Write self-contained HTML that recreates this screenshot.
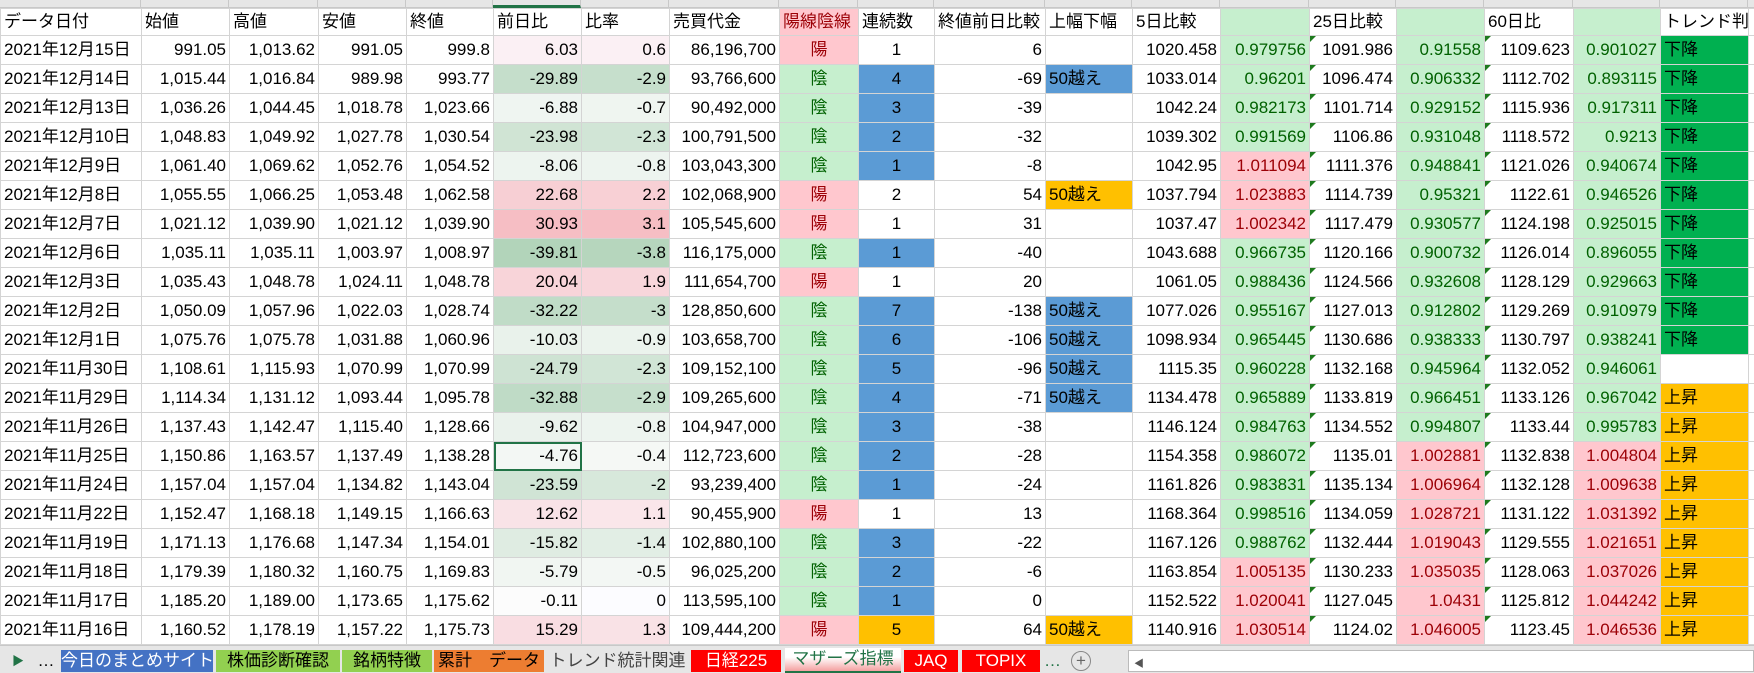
<!DOCTYPE html>
<html style="width:1754px;height:673px;overflow:hidden"><head><meta charset="utf-8">
<style>
*{margin:0;padding:0;box-sizing:border-box}
body{width:1754px;height:673px;overflow:hidden;background:#fff;font-family:"Liberation Sans","Noto Sans CJK JP",sans-serif;font-size:17px;color:#000;position:relative}
#top{position:absolute;left:0;top:0;width:1754px;height:8px;background:#e6e6e6;border-bottom:1px solid #c8c8c8}
#top div{position:absolute;top:0;height:8px;border-right:1px solid #c8c8c8}
table{position:absolute;left:0;top:8px;border-collapse:collapse;table-layout:fixed;width:1754px}
tr{height:29px}
tr.h{height:27px}
td{border:1px solid #d4d4d4;padding:0 3px;text-align:right;white-space:nowrap;overflow:hidden;line-height:20px}
tr.h td{text-align:left}
td.l{text-align:left}td.c{text-align:center}
.p{background:#ffc7ce;color:#9c0006}.g{background:#c6efce;color:#006100}
.b{background:#5b9bd5}.o{background:#ffc000}.dg{background:#00b050}
.t{position:relative}.t:before{content:"";position:absolute;left:0;top:0;border-top:6px solid #1e7a1e;border-right:6px solid transparent}
.sel{outline:2px solid #217346;outline-offset:-2px}
#tabs{position:absolute;left:0;top:645px;width:1754px;height:28px;background:#e6e6e6;border-top:1px solid #c8c8c8;z-index:2}
.tab{position:absolute;top:4px;height:22px;font-size:17px;line-height:22px;text-align:center;color:#000;white-space:nowrap;overflow:hidden}
</style></head><body>
<div id="top">
<div style="left:0;width:141px"></div><div style="left:141px;width:88px"></div><div style="left:229px;width:89px"></div><div style="left:318px;width:88px"></div><div style="left:406px;width:87px"></div><div style="left:493px;width:88px;border-bottom:3px solid #217346"></div><div style="left:581px;width:88px"></div><div style="left:669px;width:110px"></div><div style="left:779px;width:79px"></div><div style="left:858px;width:76px"></div><div style="left:934px;width:111px"></div><div style="left:1045px;width:87px"></div><div style="left:1132px;width:88px"></div><div style="left:1220px;width:89px"></div><div style="left:1309px;width:87px"></div><div style="left:1396px;width:88px"></div><div style="left:1484px;width:89px"></div><div style="left:1573px;width:87px"></div><div style="left:1660px;width:88px"></div>
</div>
<table>
<colgroup><col style="width:141px"><col style="width:88px"><col style="width:89px"><col style="width:88px"><col style="width:87px"><col style="width:88px"><col style="width:88px"><col style="width:110px"><col style="width:79px"><col style="width:76px"><col style="width:111px"><col style="width:87px"><col style="width:88px"><col style="width:89px"><col style="width:87px"><col style="width:88px"><col style="width:89px"><col style="width:87px"><col style="width:88px"><col style="width:6px"></colgroup>
<tr class="h"><td>データ日付</td><td>始値</td><td>高値</td><td>安値</td><td>終値</td><td>前日比</td><td>比率</td><td>売買代金</td><td class="p">陽線陰線</td><td>連続数</td><td>終値前日比較</td><td>上幅下幅</td><td>5日比較</td><td class="g"></td><td>25日比較</td><td class="g"></td><td>60日比</td><td class="g"></td><td>トレンド判</td><td></td></tr>
<tr><td class="l">2021年12月15日</td><td>991.05</td><td>1,013.62</td><td>991.05</td><td>999.8</td><td class="s1">6.03</td><td class="s2">0.6</td><td>86,196,700</td><td class="c p">陽</td><td class="c">1</td><td>6</td><td></td><td>1020.458</td><td class="g">0.979756</td><td class="t">1091.986</td><td class="g">0.91558</td><td class="t">1109.623</td><td class="g">0.901027</td><td class="l dg">下降</td><td></td></tr>
<tr><td class="l">2021年12月14日</td><td>1,015.44</td><td>1,016.84</td><td>989.98</td><td>993.77</td><td class="s1">-29.89</td><td class="s2">-2.9</td><td>93,766,600</td><td class="c g">陰</td><td class="c b">4</td><td>-69</td><td class="l b">50越え</td><td>1033.014</td><td class="g">0.96201</td><td class="t">1096.474</td><td class="g">0.906332</td><td class="t">1112.702</td><td class="g">0.893115</td><td class="l dg">下降</td><td></td></tr>
<tr><td class="l">2021年12月13日</td><td>1,036.26</td><td>1,044.45</td><td>1,018.78</td><td>1,023.66</td><td class="s1">-6.88</td><td class="s2">-0.7</td><td>90,492,000</td><td class="c g">陰</td><td class="c b">3</td><td>-39</td><td></td><td>1042.24</td><td class="g">0.982173</td><td class="t">1101.714</td><td class="g">0.929152</td><td class="t">1115.936</td><td class="g">0.917311</td><td class="l dg">下降</td><td></td></tr>
<tr><td class="l">2021年12月10日</td><td>1,048.83</td><td>1,049.92</td><td>1,027.78</td><td>1,030.54</td><td class="s1">-23.98</td><td class="s2">-2.3</td><td>100,791,500</td><td class="c g">陰</td><td class="c b">2</td><td>-32</td><td></td><td>1039.302</td><td class="g">0.991569</td><td class="t">1106.86</td><td class="g">0.931048</td><td class="t">1118.572</td><td class="g">0.9213</td><td class="l dg">下降</td><td></td></tr>
<tr><td class="l">2021年12月9日</td><td>1,061.40</td><td>1,069.62</td><td>1,052.76</td><td>1,054.52</td><td class="s1">-8.06</td><td class="s2">-0.8</td><td>103,043,300</td><td class="c g">陰</td><td class="c b">1</td><td>-8</td><td></td><td>1042.95</td><td class="p">1.011094</td><td class="t">1111.376</td><td class="g">0.948841</td><td class="t">1121.026</td><td class="g">0.940674</td><td class="l dg">下降</td><td></td></tr>
<tr><td class="l">2021年12月8日</td><td>1,055.55</td><td>1,066.25</td><td>1,053.48</td><td>1,062.58</td><td class="s1">22.68</td><td class="s2">2.2</td><td>102,068,900</td><td class="c p">陽</td><td class="c">2</td><td>54</td><td class="l o">50越え</td><td>1037.794</td><td class="p">1.023883</td><td class="t">1114.739</td><td class="g">0.95321</td><td class="t">1122.61</td><td class="g">0.946526</td><td class="l dg">下降</td><td></td></tr>
<tr><td class="l">2021年12月7日</td><td>1,021.12</td><td>1,039.90</td><td>1,021.12</td><td>1,039.90</td><td class="s1">30.93</td><td class="s2">3.1</td><td>105,545,600</td><td class="c p">陽</td><td class="c">1</td><td>31</td><td></td><td>1037.47</td><td class="p">1.002342</td><td class="t">1117.479</td><td class="g">0.930577</td><td class="t">1124.198</td><td class="g">0.925015</td><td class="l dg">下降</td><td></td></tr>
<tr><td class="l">2021年12月6日</td><td>1,035.11</td><td>1,035.11</td><td>1,003.97</td><td>1,008.97</td><td class="s1">-39.81</td><td class="s2">-3.8</td><td>116,175,000</td><td class="c g">陰</td><td class="c b">1</td><td>-40</td><td></td><td>1043.688</td><td class="g">0.966735</td><td class="t">1120.166</td><td class="g">0.900732</td><td class="t">1126.014</td><td class="g">0.896055</td><td class="l dg">下降</td><td></td></tr>
<tr><td class="l">2021年12月3日</td><td>1,035.43</td><td>1,048.78</td><td>1,024.11</td><td>1,048.78</td><td class="s1">20.04</td><td class="s2">1.9</td><td>111,654,700</td><td class="c p">陽</td><td class="c">1</td><td>20</td><td></td><td>1061.05</td><td class="g">0.988436</td><td class="t">1124.566</td><td class="g">0.932608</td><td class="t">1128.129</td><td class="g">0.929663</td><td class="l dg">下降</td><td></td></tr>
<tr><td class="l">2021年12月2日</td><td>1,050.09</td><td>1,057.96</td><td>1,022.03</td><td>1,028.74</td><td class="s1">-32.22</td><td class="s2">-3</td><td>128,850,600</td><td class="c g">陰</td><td class="c b">7</td><td>-138</td><td class="l b">50越え</td><td>1077.026</td><td class="g">0.955167</td><td class="t">1127.013</td><td class="g">0.912802</td><td class="t">1129.269</td><td class="g">0.910979</td><td class="l dg">下降</td><td></td></tr>
<tr><td class="l">2021年12月1日</td><td>1,075.76</td><td>1,075.78</td><td>1,031.88</td><td>1,060.96</td><td class="s1">-10.03</td><td class="s2">-0.9</td><td>103,658,700</td><td class="c g">陰</td><td class="c b">6</td><td>-106</td><td class="l b">50越え</td><td>1098.934</td><td class="g">0.965445</td><td class="t">1130.686</td><td class="g">0.938333</td><td class="t">1130.797</td><td class="g">0.938241</td><td class="l dg">下降</td><td></td></tr>
<tr><td class="l">2021年11月30日</td><td>1,108.61</td><td>1,115.93</td><td>1,070.99</td><td>1,070.99</td><td class="s1">-24.79</td><td class="s2">-2.3</td><td>109,152,100</td><td class="c g">陰</td><td class="c b">5</td><td>-96</td><td class="l b">50越え</td><td>1115.35</td><td class="g">0.960228</td><td class="t">1132.168</td><td class="g">0.945964</td><td class="t">1132.052</td><td class="g">0.946061</td><td></td><td></td></tr>
<tr><td class="l">2021年11月29日</td><td>1,114.34</td><td>1,131.12</td><td>1,093.44</td><td>1,095.78</td><td class="s1">-32.88</td><td class="s2">-2.9</td><td>109,265,600</td><td class="c g">陰</td><td class="c b">4</td><td>-71</td><td class="l b">50越え</td><td>1134.478</td><td class="g">0.965889</td><td class="t">1133.819</td><td class="g">0.966451</td><td class="t">1133.126</td><td class="g">0.967042</td><td class="l o">上昇</td><td></td></tr>
<tr><td class="l">2021年11月26日</td><td>1,137.43</td><td>1,142.47</td><td>1,115.40</td><td>1,128.66</td><td class="s1">-9.62</td><td class="s2">-0.8</td><td>104,947,000</td><td class="c g">陰</td><td class="c b">3</td><td>-38</td><td></td><td>1146.124</td><td class="g">0.984763</td><td class="t">1134.552</td><td class="g">0.994807</td><td class="t">1133.44</td><td class="g">0.995783</td><td class="l o">上昇</td><td></td></tr>
<tr><td class="l">2021年11月25日</td><td>1,150.86</td><td>1,163.57</td><td>1,137.49</td><td>1,138.28</td><td class="s1 sel">-4.76</td><td class="s2">-0.4</td><td>112,723,600</td><td class="c g">陰</td><td class="c b">2</td><td>-28</td><td></td><td>1154.358</td><td class="g">0.986072</td><td class="t">1135.01</td><td class="p">1.002881</td><td class="t">1132.838</td><td class="p">1.004804</td><td class="l o">上昇</td><td></td></tr>
<tr><td class="l">2021年11月24日</td><td>1,157.04</td><td>1,157.04</td><td>1,134.82</td><td>1,143.04</td><td class="s1">-23.59</td><td class="s2">-2</td><td>93,239,400</td><td class="c g">陰</td><td class="c b">1</td><td>-24</td><td></td><td>1161.826</td><td class="g">0.983831</td><td class="t">1135.134</td><td class="p">1.006964</td><td class="t">1132.128</td><td class="p">1.009638</td><td class="l o">上昇</td><td></td></tr>
<tr><td class="l">2021年11月22日</td><td>1,152.47</td><td>1,168.18</td><td>1,149.15</td><td>1,166.63</td><td class="s1">12.62</td><td class="s2">1.1</td><td>90,455,900</td><td class="c p">陽</td><td class="c">1</td><td>13</td><td></td><td>1168.364</td><td class="g">0.998516</td><td class="t">1134.059</td><td class="p">1.028721</td><td class="t">1131.122</td><td class="p">1.031392</td><td class="l o">上昇</td><td></td></tr>
<tr><td class="l">2021年11月19日</td><td>1,171.13</td><td>1,176.68</td><td>1,147.34</td><td>1,154.01</td><td class="s1">-15.82</td><td class="s2">-1.4</td><td>102,880,100</td><td class="c g">陰</td><td class="c b">3</td><td>-22</td><td></td><td>1167.126</td><td class="g">0.988762</td><td class="t">1132.444</td><td class="p">1.019043</td><td class="t">1129.555</td><td class="p">1.021651</td><td class="l o">上昇</td><td></td></tr>
<tr><td class="l">2021年11月18日</td><td>1,179.39</td><td>1,180.32</td><td>1,160.75</td><td>1,169.83</td><td class="s1">-5.79</td><td class="s2">-0.5</td><td>96,025,200</td><td class="c g">陰</td><td class="c b">2</td><td>-6</td><td></td><td>1163.854</td><td class="p">1.005135</td><td class="t">1130.233</td><td class="p">1.035035</td><td class="t">1128.063</td><td class="p">1.037026</td><td class="l o">上昇</td><td></td></tr>
<tr><td class="l">2021年11月17日</td><td>1,185.20</td><td>1,189.00</td><td>1,173.65</td><td>1,175.62</td><td class="s1">-0.11</td><td class="s2">0</td><td>113,595,100</td><td class="c g">陰</td><td class="c b">1</td><td>0</td><td></td><td>1152.522</td><td class="p">1.020041</td><td class="t">1127.045</td><td class="p">1.0431</td><td class="t">1125.812</td><td class="p">1.044242</td><td class="l o">上昇</td><td></td></tr>
<tr><td class="l">2021年11月16日</td><td>1,160.52</td><td>1,178.19</td><td>1,157.22</td><td>1,175.73</td><td class="s1">15.29</td><td class="s2">1.3</td><td>109,444,200</td><td class="c p">陽</td><td class="c o">5</td><td>64</td><td class="l o">50越え</td><td>1140.916</td><td class="p">1.030514</td><td class="t">1124.02</td><td class="p">1.046005</td><td class="t">1123.45</td><td class="p">1.046536</td><td class="l o">上昇</td><td></td></tr>
<tr><td class="l"></td><td></td><td></td><td></td><td></td><td class="s1"></td><td class="s2"></td><td></td><td class="c g"></td><td class="c b"></td><td></td><td></td><td></td><td class="g"></td><td class="t"></td><td class="p"></td><td class="t"></td><td class="p"></td><td class="l o"></td><td></td></tr>
</table>
<div id="tabs">
<div class="tab" style="left:12px;width:12px;font-size:12px;color:#217346">&#9654;</div>
<div class="tab" style="left:36px;width:20px">…</div>
<div class="tab" style="left:61px;width:152px;background:#4472c4;color:#fff">今日のまとめサイト</div>
<div class="tab" style="left:216px;width:124px;background:#92d050">株価診断確認</div>
<div class="tab" style="left:342px;width:90px;background:#92d050">銘柄特徴</div>
<div class="tab" style="left:434px;width:110px;background:#ed7d31">累計　データ</div>
<div class="tab" style="left:546px;width:143px;color:#444">トレンド統計関連</div>
<div class="tab" style="left:691px;width:90px;background:#f00;color:#fff">日経225</div>
<div class="tab" style="left:785px;width:116px;background:linear-gradient(#fff 40%,#f4a0a0);color:#217346;border-bottom:3px solid #217346;top:2px;height:26px">マザーズ指標</div>
<div class="tab" style="left:904px;width:54px;background:#f00;color:#fff">JAQ</div>
<div class="tab" style="left:962px;width:78px;background:#f00;color:#fff">TOPIX</div>
<div class="tab" style="left:1044px;width:16px;color:#217346">…</div>
<div class="tab" style="left:1071px;width:20px;height:20px;top:5px;border:1px solid #888;border-radius:50%;line-height:17px;color:#666">+</div>
<div class="tab" style="left:1104px;width:6px;color:#aaa;font-size:14px">⋮</div>
<div style="position:absolute;left:1128px;top:4px;width:626px;height:22px;background:#fff;border:1px solid #bbb"><span style="position:absolute;left:5px;top:4px;font-size:10px;color:#555">&#9664;</span></div>
</div>
<script>
function col(cls,max){document.querySelectorAll('td.'+cls).forEach(function(td){var v=parseFloat(td.textContent);if(isNaN(v))return;var f=Math.min(1,Math.abs(v)/max);var r,g,b;if(v>=0){r=Math.round(252-8*f);g=Math.round(252-80*f);b=Math.round(255-76*f);}else{r=Math.round(252-74*f);g=Math.round(252-40*f);b=Math.round(252-66*f);}td.style.background='rgb('+r+','+g+','+b+')';});}
col('s1',40);col('s2',4);
</script>
</body></html>
